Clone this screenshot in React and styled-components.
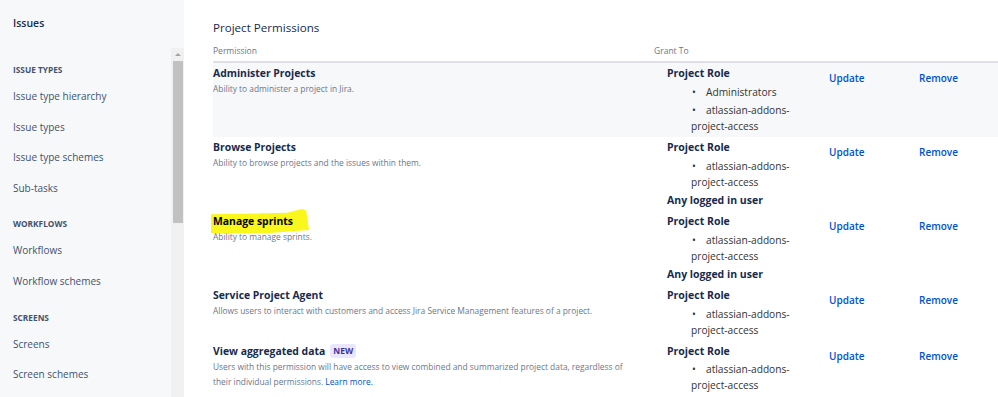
import styled, { createGlobalStyle } from "styled-components";

const GlobalStyle = createGlobalStyle`
  body {
    margin: 0;
    font-family: "Open Sans", "Noto Sans", sans-serif;
    background: #fff;
    color: #172b4d;
  }
`;

const Page = styled.div`
  display: flex;
  height: 397px;
  overflow: hidden;
`;

const Sidebar = styled.aside`
  width: 184px;
  flex-shrink: 0;
  display: flex;
  flex-direction: column;
  background: #f7f8f9;
`;

const SidebarHeader = styled.div`
  height: 48px;
  box-sizing: border-box;
  padding: 15px 0 0 13px;
  font-size: 10.5px;
  line-height: 16px;
  font-weight: 600;
  color: #172b4d;
`;

const ScrollArea = styled.div`
  flex: 1;
  display: flex;
  min-height: 0;
`;

const Nav = styled.nav`
  flex: 1;
  padding: 14px 0 0 13px;
`;

const Section = styled.div`
  margin-bottom: 13px;
`;

const SectionTitle = styled.div`
  font-size: 8.3px;
  line-height: 16px;
  font-weight: 700;
  color: #42526e;
  text-transform: uppercase;
  margin-bottom: 3px;
`;

const NavItem = styled.div`
  font-size: 10px;
  height: 30.6px;
  line-height: 30.6px;
  color: #42526e;
`;

const Track = styled.div`
  width: 13px;
  background: #f1f1f1;
  display: flex;
  flex-direction: column;
  align-items: center;
`;

const Arrow = styled.div`
  height: 13px;
  display: flex;
  align-items: center;
  justify-content: center;
  &::before {
    content: "";
    border-left: 3px solid transparent;
    border-right: 3px solid transparent;
    border-bottom: 3px solid #a3a3a3;
  }
`;

const Thumb = styled.div`
  width: 10px;
  height: 162px;
  background: #c1c1c1;
`;

const Main = styled.main`
  flex: 1;
  padding: 18px 0 0 29px;
  min-width: 0;
`;

const Title = styled.h2`
  margin: 0;
  font-size: 11.6px;
  line-height: 20px;
  font-weight: 500;
  color: #172b4d;
`;

const Table = styled.div`
  display: flex;
  flex-direction: column;
`;

const Row = styled.div`
  display: grid;
  grid-template-columns: 441px 175px 90px 1fr;
  background: ${(p) => (p.$shaded ? "#f7f8fa" : "transparent")};
  padding: ${(p) => (p.$head ? "6px 0 3px" : "2px 0 3px")};
  border-bottom: ${(p) => (p.$head ? "2px solid #dfe1e6" : "none")};
`;

const HeadCell = styled.div`
  font-size: 8.5px;
  line-height: 14px;
  color: #6b778c;
`;

const PermCell = styled.div`
  padding-right: 20px;
`;

const PermName = styled.div`
  display: flex;
  align-items: center;
  gap: 5px;
  font-size: 10.4px;
  line-height: 16px;
  font-weight: 700;
  color: #172b4d;
`;

const Highlight = styled.span`
  position: relative;
  z-index: 0;
  color: #000;
  &::before {
    content: "";
    position: absolute;
    z-index: -1;
    left: -2px;
    right: -16px;
    top: -4px;
    bottom: -4px;
    background: #f9f71c;
    clip-path: polygon(0 22%, 78% 16%, 92% 0, 97% 4%, 100% 88%, 60% 100%, 0 100%);
  }
`;

const Badge = styled.span`
  font-size: 8.5px;
  line-height: 14px;
  padding: 0 3px;
  border-radius: 3px;
  background: #eae6ff;
  color: #403294;
  font-weight: 700;
`;

const PermDesc = styled.div`
  font-size: 8.4px;
  line-height: 15px;
  color: #6b778c;
`;

const Link = styled.a`
  color: #0052cc;
  text-decoration: none;
`;

const GrantCell = styled.div`
  padding-left: 13px;
  font-size: 10.5px;
  color: #172b4d;
`;

const GrantTitle = styled.div`
  font-weight: 700;
  line-height: 16px;
  margin-top: ${(p) => (p.$first ? 0 : 2.5)}px;
`;

const GrantList = styled.ul`
  list-style: none;
  margin: 0;
  padding: 0 0 0 24px;
  width: 112px;
`;

const GrantItem = styled.li`
  margin-top: 2.5px;
  font-size: 10.2px;
  line-height: 16px;
  color: #333;
  &::before {
    content: "•";
    display: inline-block;
    width: 15px;
    padding-left: 1px;
    box-sizing: border-box;
  }
`;

const Action = styled.a`
  padding-top: 5px;
  font-size: 10px;
  line-height: 16px;
  font-weight: 600;
  color: #0052cc;
  text-decoration: none;
`;

const nav = [
  { title: "Issue types", items: ["Issue type hierarchy", "Issue types", "Issue type schemes", "Sub-tasks"] },
  { title: "Workflows", items: ["Workflows", "Workflow schemes"] },
  { title: "Screens", items: ["Screens", "Screen schemes"] },
];

const addons = "atlassian-addons-project-access";

const permissions = [
  {
    name: "Administer Projects",
    desc: "Ability to administer a project in Jira.",
    grants: [{ title: "Project Role", items: ["Administrators", addons] }],
  },
  {
    name: "Browse Projects",
    desc: "Ability to browse projects and the issues within them.",
    grants: [{ title: "Project Role", items: [addons] }, { title: "Any logged in user", items: [] }],
  },
  {
    name: "Manage sprints",
    highlight: true,
    desc: "Ability to manage sprints.",
    grants: [{ title: "Project Role", items: [addons] }, { title: "Any logged in user", items: [] }],
  },
  {
    name: "Service Project Agent",
    desc: "Allows users to interact with customers and access Jira Service Management features of a project.",
    grants: [{ title: "Project Role", items: [addons] }],
  },
  {
    name: "View aggregated data",
    isNew: true,
    desc: (
      <>
        Users with this permission will have access to view combined and summarized project data, regardless of
        their individual permissions. <Link href="#">Learn more.</Link>
      </>
    ),
    grants: [{ title: "Project Role", items: [addons] }],
  },
];

const App = () => {
  return (
    <Page>
      <GlobalStyle />
      <Sidebar>
        <SidebarHeader>Issues</SidebarHeader>
        <ScrollArea>
          <Nav>
            {nav.map((s) => (
              <Section key={s.title}>
                <SectionTitle>{s.title}</SectionTitle>
                {s.items.map((i) => (
                  <NavItem key={i}>{i}</NavItem>
                ))}
              </Section>
            ))}
          </Nav>
          <Track>
            <Arrow />
            <Thumb />
          </Track>
        </ScrollArea>
      </Sidebar>
      <Main>
        <Title>Project Permissions</Title>
        <Table>
          <Row $head>
            <HeadCell>Permission</HeadCell>
            <HeadCell>Grant To</HeadCell>
            <div />
            <div />
          </Row>
          {permissions.map((p, idx) => (
            <Row key={p.name} $shaded={idx === 0}>
              <PermCell>
                <PermName>
                  {p.highlight ? <Highlight>{p.name}</Highlight> : p.name}
                  {p.isNew && <Badge>NEW</Badge>}
                </PermName>
                <PermDesc>{p.desc}</PermDesc>
              </PermCell>
              <GrantCell>
                {p.grants.map((g, gi) => (
                  <div key={g.title}>
                    <GrantTitle $first={gi === 0}>{g.title}</GrantTitle>
                    {g.items.length > 0 && (
                      <GrantList>
                        {g.items.map((it) => (
                          <GrantItem key={it}>{it}</GrantItem>
                        ))}
                      </GrantList>
                    )}
                  </div>
                ))}
              </GrantCell>
              <Action href="#">Update</Action>
              <Action href="#">Remove</Action>
            </Row>
          ))}
        </Table>
      </Main>
    </Page>
  );
};

export default App;
